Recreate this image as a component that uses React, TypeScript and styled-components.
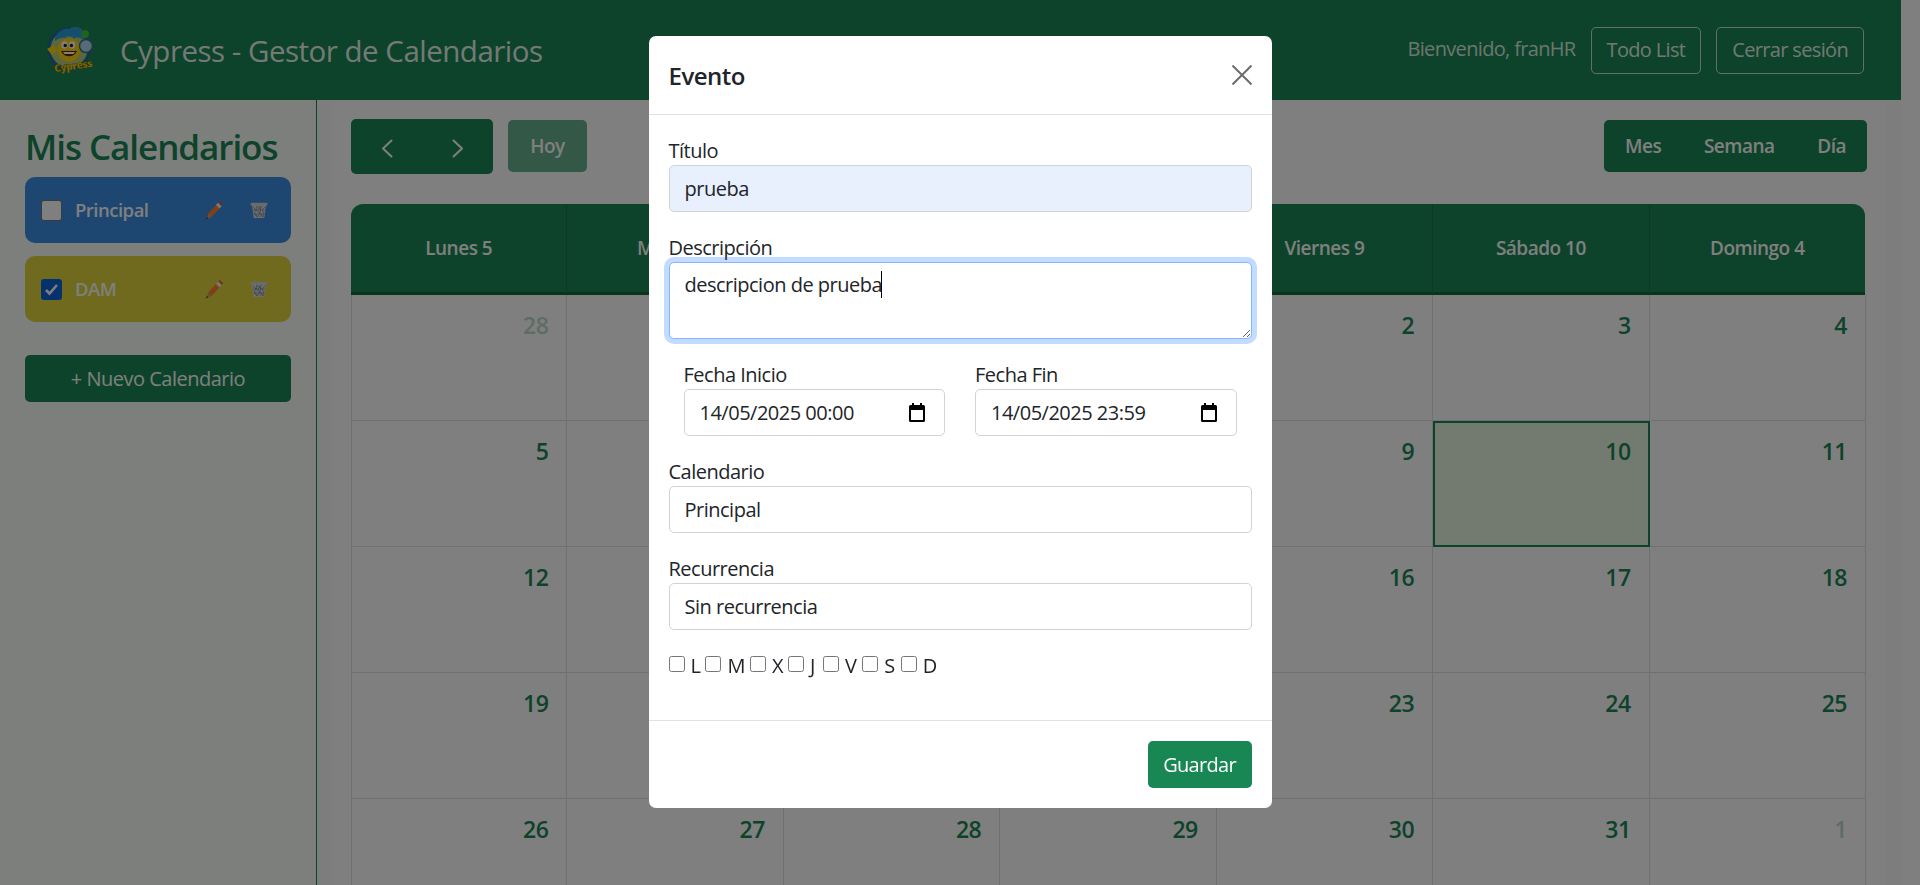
import React from 'react';
import styled, { createGlobalStyle } from 'styled-components';

const GlobalStyle = createGlobalStyle`
  html, body {
    margin: 0;
    height: 100%;
    overflow: hidden;
    background: #fff;
  }
  body {
    font-family: 'Open Sans', 'Noto Sans', sans-serif;
    font-size: 20px;
    letter-spacing: -0.025em;
    line-height: 30px;
    color: #212529;
  }
  * { box-sizing: border-box; }
`;

const Page = styled.div`
  width: 1901px;
`;

const Navbar = styled.nav`
  height: 100px;
  background: #198754;
  display: flex;
  align-items: center;
  justify-content: space-between;
  padding: 0 37px 0 46px;
`;

const Brand = styled.div`
  display: flex;
  align-items: center;
  gap: 26px;
  color: rgba(255, 255, 255, 0.92);
  font-size: 29.5px;
  line-height: 38px;
`;

const BrandName = styled.span`
  padding-top: 2px;
`;

const NavRight = styled.div`
  display: flex;
  align-items: center;
  padding-top: 2px;
  color: rgba(255, 255, 255, 0.85);
  letter-spacing: -0.033em;
`;

const Welcome = styled.span`
  margin-right: 15px;
  position: relative;
  top: -2px;
`;

const NavButton = styled.button`
  height: 47px;
  padding: 0 15px;
  margin-top: -2px;
  margin-left: ${(p: { $gap?: number }) => p.$gap || 0}px;
  background: transparent;
  border: 1px solid rgba(255, 255, 255, 0.75);
  border-radius: 5px;
  color: rgba(255, 255, 255, 0.9);
  font: inherit;
  letter-spacing: inherit;
`;

const Layout = styled.div`
  display: flex;
  height: 785px;
`;

const Sidebar = styled.aside`
  width: 317px;
  flex-shrink: 0;
  background: #fbfefa;
  border-right: 1px solid #198754;
  padding: 20px 25px 0;
`;

const SidebarTitle = styled.h2`
  margin: 0 0 1px;
  height: 56px;
  font-size: 35px;
  line-height: 54px;
  font-weight: 600;
  letter-spacing: -0.03em;
  color: #198754;
  white-space: nowrap;
`;

const CalendarCard = styled.div<{ $color: string }>`
  height: 66px;
  margin-bottom: 13px;
  padding: 0 23px 0 16px;
  display: flex;
  align-items: center;
  border-radius: 10px;
  background: ${(p) => p.$color};
  color: #fff;
  font-size: 18.5px;
  font-weight: 600;
`;

const CardCheck = styled.span<{ $checked?: boolean }>`
  width: 21px;
  height: 21px;
  margin-right: 13px;
  border-radius: 3px;
  border: ${(p) => (p.$checked ? 'none' : '1.5px solid #767676')};
  background: ${(p) => (p.$checked ? '#0b63d8' : '#fff')};
  display: flex;
  align-items: center;
  justify-content: center;
`;

const CardName = styled.span`
  flex: 1;
`;

const CardIcons = styled.span`
  display: flex;
  align-items: center;
  gap: 27px;
`;

const NewCalendar = styled.button`
  width: 266px;
  height: 47px;
  margin-top: 20px;
  background: #198754;
  border: none;
  border-radius: 5px;
  color: #fff;
  font: inherit;
  letter-spacing: inherit;
`;

const Main = styled.main`
  flex: 1;
  background: #fafafa;
  padding: 0 15px;
  min-width: 0;
`;

const MainCard = styled.section`
  background: #fff;
  height: 100%;
  padding: 19px 19px 0;
  border-radius: 10px 10px 0 0;
  overflow: hidden;
`;

const Toolbar = styled.div`
  height: 55px;
  margin-bottom: 30px;
  display: flex;
  align-items: center;
  justify-content: space-between;
  font-size: 19px;
`;

const ToolbarSide = styled.div`
  display: flex;
  align-items: center;
  gap: 15px;
`;

const ArrowGroup = styled.div`
  width: 142px;
  height: 55px;
  background: #198754;
  border-radius: 5px;
  display: flex;
`;

const ArrowButton = styled.button`
  flex: 1;
  background: none;
  border: none;
  padding: 4px 0 0;
  display: flex;
  align-items: center;
  justify-content: center;
`;

const TodayButton = styled.button`
  width: 79px;
  height: 52px;
  margin-bottom: 2px;
  background: #198754;
  opacity: 0.65;
  border: none;
  border-radius: 5px;
  color: #fff;
  font: inherit;
  font-weight: 600;
  letter-spacing: inherit;
`;

const ViewGroup = styled.div`
  height: 52px;
  width: 263px;
  margin-bottom: 2px;
  background: #198754;
  border-radius: 5px;
  display: flex;
  align-items: center;
  justify-content: space-between;
  padding: 0 21px;
  color: #fff;
  font-weight: 600;
`;

const CalendarGrid = styled.div`
  display: grid;
  grid-template-columns: repeat(7, 1fr);
  width: 1515px;
`;

const DayHeader = styled.div<{ $first?: boolean; $last?: boolean }>`
  height: 91px;
  margin-right: ${(p) => (p.$last ? '1px' : '0')};
  display: flex;
  align-items: center;
  justify-content: center;
  background: #198754;
  border-right: ${(p) => (p.$last ? 'none' : '1px solid #167549')};
  border-bottom: 3px solid #12663f;
  border-top-left-radius: ${(p) => (p.$first ? '12px' : '0')};
  border-top-right-radius: ${(p) => (p.$last ? '12px' : '0')};
  color: #fff;
  font-size: 19px;
  font-weight: 600;
`;

const DayCell = styled.div<{ $selected?: boolean; $first?: boolean }>`
  height: 126px;
  padding: 15px 18px 0 0;
  text-align: right;
  font-size: 23px;
  font-weight: 600;
  color: #198754;
  border-right: 1px solid #dfe1e1;
  border-bottom: 1px solid #dfe1e1;
  border-left: ${(p) => (p.$first ? '1px solid #dfe1e1' : 'none')};
  ${(p) =>
    p.$selected &&
    `
    background: #e6f4e1;
    outline: 2px solid #198754;
    outline-offset: -2px;
  `}
`;

const DayNumber = styled.span<{ $muted?: boolean }>`
  opacity: ${(p) => (p.$muted ? 0.3 : 1)};
`;

const Backdrop = styled.div`
  position: fixed;
  inset: 0;
  background: rgba(0, 0, 0, 0.5);
  display: flex;
  justify-content: center;
  align-items: flex-start;
  padding-top: 36px;
`;

const Modal = styled.div`
  width: 623px;
  height: 772px;
  background: #fff;
  border-radius: 7px;
  display: flex;
  flex-direction: column;
`;

const ModalHeader = styled.header`
  height: 79px;
  flex-shrink: 0;
  padding: 0 20px;
  display: flex;
  align-items: center;
  justify-content: space-between;
  border-bottom: 1px solid #dee2e6;
`;

const ModalTitle = styled.h5`
  margin: 2px 0 0;
  font-size: 24px;
  font-weight: 600;
`;

const CloseButton = styled.button`
  width: 20px;
  height: 20px;
  padding: 0;
  background: none;
  border: none;
  display: flex;
`;

const ModalBody = styled.div`
  flex: 1;
  padding: 20px;
`;

const FormGroup = styled.div`
  margin-bottom: 20px;
`;

const Label = styled.label`
  display: block;
  height: 30px;
  line-height: 32px;
  color: #212529;
`;

const Control = styled.input<{ $autofill?: boolean }>`
  display: block;
  width: 100%;
  height: 47px;
  padding: 0 15px;
  background: ${(p) => (p.$autofill ? '#e8f0fe' : '#fff')};
  border: 1.25px solid #ced4da;
  border-radius: 5px;
  color: #212529;
  font: inherit;
  letter-spacing: inherit;
  outline: none;
`;

const SelectControl = styled.select`
  display: block;
  width: 100%;
  height: 47px;
  padding: 0 15px;
  background: #fff;
  border: 1.25px solid #ced4da;
  border-radius: 5px;
  color: #212529;
  font: inherit;
  letter-spacing: inherit;
  appearance: none;
  outline: none;
`;

const TextareaWrap = styled.div`
  position: relative;
`;

const TextArea = styled.textarea`
  display: block;
  width: 100%;
  height: 77px;
  padding: 7px 15px;
  background: #fff;
  border: 1.25px solid #86b7fe;
  border-radius: 5px;
  box-shadow: 0 0 0 5px rgba(13, 110, 253, 0.25);
  color: #212529;
  caret-color: transparent;
  font: inherit;
  letter-spacing: inherit;
  outline: none;
`;

const Caret = styled.span`
  position: absolute;
  top: 9px;
  left: 212px;
  width: 1px;
  height: 27px;
  background: #000;
`;

const DateRow = styled.div`
  display: grid;
  grid-template-columns: 1fr 1fr;
  gap: 30px;
  padding: 0 15px;
  margin-bottom: 20px;
`;

const DateField = styled.div`
  position: relative;
`;

const CalendarIcon = styled.svg`
  position: absolute;
  top: 14px;
  right: 20px;
`;

const DaysRow = styled.div`
  display: flex;
  align-items: center;
  height: 30px;
  margin-top: 21px;
`;

const DayLabel = styled.label`
  display: flex;
  align-items: center;
  margin-right: ${(p: { $gap: number }) => p.$gap}px;
`;

const DayBox = styled.input`
  width: 16px;
  height: 16px;
  margin: -4px 6px 0 0;
`;

const ModalFooter = styled.footer`
  height: 88px;
  flex-shrink: 0;
  padding: 20px;
  display: flex;
  justify-content: flex-end;
  border-top: 1px solid #dee2e6;
`;

const SaveButton = styled.button`
  width: 104px;
  height: 47px;
  background: #198754;
  border: none;
  border-radius: 5px;
  color: #fff;
  font: inherit;
  letter-spacing: -0.035em;
`;

const Chevron = ({ left }: { left?: boolean }) => (
  <svg width="12" height="19" viewBox="0 0 12 19" fill="none">
    <path
      d={left ? 'M10.500 1.500L2 9.500l8.500 8' : 'M1.500 1.500L10 9.500l-8.500 8'}
      stroke="#fff"
      strokeWidth="2"
      strokeLinecap="round"
      strokeLinejoin="round"
    />
  </svg>
);

const PencilIcon = () => (
  <svg width="18" height="19" viewBox="0 0 18 19">
    <path d="M4 11.500L12 3l3.500 3.500-8 8.500-4.500 1z" fill="#ff8030" />
    <path d="M11 4l2-2.200 3.500 3.500-2 2.200z" fill="#f4f0ee" />
    <path d="M13.500 1.300L14.700 0 18 3.300 16.800 4.800z" fill="#ee4f45" />
    <path d="M3.500 12l3.500 3.500-5.500 3z" fill="#e09560" />
    <path d="M2.200 16L3.200 17l-2.600 1.800z" fill="#333" />
  </svg>
);

const TrashIcon = () => (
  <svg width="18" height="17" viewBox="0 0 18 17" fill="none">
    <path d="M2 3l1.700 13h10.600L16 3z" fill="#d6dae0" />
    <path
      d="M3 5l3 3-2 3 3 4M7 4l-1 4 4 3-3 4M11 4l-1 7 3 4M15 5l-3 3 2 3-1 4M3 8h12M4 12h10M7 4l4 4M11 4L8 8M5 12l3 3M12 12l-2 3"
      stroke="#7f858f"
      strokeWidth="0.7"
    />
    <rect x="0.500" y="0.800" width="17" height="2.600" rx="1" fill="#d2d5da" />
  </svg>
);

const CheckMark = () => (
  <svg width="15" height="15" viewBox="0 0 15 15" fill="none">
    <path d="M2 8l3.500 3.500L13 3" stroke="#fff" strokeWidth="2.600" />
  </svg>
);

const Logo = () => (
  <svg width="48" height="50" viewBox="0 0 48 50">
    <circle cx="23" cy="24" r="22" fill="#1c6f96" />
    <circle cx="23" cy="24" r="18.500" fill="#b7cd7d" />
    <path d="M9 16c-1-7 8-14 15-12 2-3 10-3 12 1 4 2 3 7 1 10-3-3-7-3-9-1-2-3-6-3-9-1-3-1-6 0-10 3z" fill="#2d9fd8" />
    <circle cx="39" cy="9" r="4" fill="#45c23c" />
    <circle cx="23" cy="25" r="11.500" fill="#ffd60a" />
    <ellipse cx="18.500" cy="20" rx="3.200" ry="3.800" fill="#fff" />
    <ellipse cx="26" cy="20" rx="3.200" ry="3.800" fill="#fff" />
    <circle cx="19.200" cy="20.500" r="1.700" fill="#222" />
    <circle cx="25.400" cy="20.500" r="1.700" fill="#222" />
    <path d="M15 26c3 7 13 7 16 0z" fill="#5b2410" />
    <path d="M17 27h12l-1.500 2h-9z" fill="#fff" />
    <circle cx="40" cy="21" r="6.500" fill="#a9d8ee" stroke="#39708c" strokeWidth="1.500" />
    <path d="M1 24l7-4 3 6-5 4z" fill="#ffd60a" />
    <text x="8" y="45" fontFamily="Open Sans" fontSize="10.500" fontWeight="800" fill="#ffd60a" stroke="#4d3b00" strokeWidth="0.300" letterSpacing="-0.600" transform="rotate(-8 24 41)">
      Cypress
    </text>
  </svg>
);

const headers = ['Lunes 5', 'Martes 6', 'Miércoles 7', 'Jueves 8', 'Viernes 9', 'Sábado 10', 'Domingo 4'];

const weeks: number[][] = [
  [28, 29, 30, 1, 2, 3, 4],
  [5, 6, 7, 8, 9, 10, 11],
  [12, 13, 14, 15, 16, 17, 18],
  [19, 20, 21, 22, 23, 24, 25],
  [26, 27, 28, 29, 30, 31, 1],
];

const repeatDays = [
  { name: 'L', gap: 5 },
  { name: 'M', gap: 5 },
  { name: 'X', gap: 5 },
  { name: 'J', gap: 8 },
  { name: 'V', gap: 6 },
  { name: 'S', gap: 6 },
  { name: 'D', gap: 0 },
];

const isMuted = (week: number, day: number) => (week === 0 && day < 3) || (week === 4 && day === 6);

const DateInput = ({ label, value }: { label: string; value: string }) => (
  <div>
    <Label>{label}</Label>
    <DateField>
      <Control type="text" readOnly value={value} />
      <CalendarIcon width="16" height="19" viewBox="0 0 16 19">
        <path d="M3 0h2v2h6V0h2v2h1.500A1.500 1.500 0 0 1 16 3.500v14a1.500 1.500 0 0 1-1.500 1.500h-13A1.500 1.500 0 0 1 0 17.500v-14A1.500 1.500 0 0 1 1.500 2H3zM2 7v10h12V7z" fill="#000" />
      </CalendarIcon>
    </DateField>
  </div>
);

const App = () => (
  <>
    <GlobalStyle />
    <Page>
      <Navbar>
        <Brand>
          <Logo />
          <BrandName>Cypress - Gestor de Calendarios</BrandName>
        </Brand>
        <NavRight>
          <Welcome>Bienvenido, franHR</Welcome>
          <NavButton>Todo List</NavButton>
          <NavButton $gap={15}>Cerrar sesión</NavButton>
        </NavRight>
      </Navbar>
      <Layout>
        <Sidebar>
          <SidebarTitle>Mis Calendarios</SidebarTitle>
          <CalendarCard $color="#3a8ce0">
            <CardCheck />
            <CardName>Principal</CardName>
            <CardIcons>
              <PencilIcon />
              <TrashIcon />
            </CardIcons>
          </CalendarCard>
          <CalendarCard $color="#ded43a">
            <CardCheck $checked>
              <CheckMark />
            </CardCheck>
            <CardName>DAM</CardName>
            <CardIcons>
              <PencilIcon />
              <TrashIcon />
            </CardIcons>
          </CalendarCard>
          <NewCalendar>+ Nuevo Calendario</NewCalendar>
        </Sidebar>
        <Main>
          <MainCard>
            <Toolbar>
              <ToolbarSide>
                <ArrowGroup>
                  <ArrowButton>
                    <Chevron left />
                  </ArrowButton>
                  <ArrowButton>
                    <Chevron />
                  </ArrowButton>
                </ArrowGroup>
                <TodayButton>Hoy</TodayButton>
              </ToolbarSide>
              <ViewGroup>
                <span>Mes</span>
                <span>Semana</span>
                <span>Día</span>
              </ViewGroup>
            </Toolbar>
            <CalendarGrid>
              {headers.map((h, i) => (
                <DayHeader key={h} $first={i === 0} $last={i === 6}>
                  {h}
                </DayHeader>
              ))}
              {weeks.map((week, w) =>
                week.map((d, i) => (
                  <DayCell key={`${w}-${i}`} $first={i === 0} $selected={w === 1 && i === 5}>
                    <DayNumber $muted={isMuted(w, i)}>{d}</DayNumber>
                  </DayCell>
                ))
              )}
            </CalendarGrid>
          </MainCard>
        </Main>
      </Layout>
    </Page>
    <Backdrop>
      <Modal>
        <ModalHeader>
          <ModalTitle>Evento</ModalTitle>
          <CloseButton aria-label="Cerrar">
            <svg width="20" height="20" viewBox="0 0 20 20">
              <path d="M0.500 0.500l19 19M19.500 0.500l-19 19" stroke="#6c6c6c" strokeWidth="2" />
            </svg>
          </CloseButton>
        </ModalHeader>
        <ModalBody>
          <FormGroup>
            <Label>Título</Label>
            <Control $autofill type="text" readOnly value="prueba" />
          </FormGroup>
          <FormGroup>
            <Label>Descripción</Label>
            <TextareaWrap>
              <TextArea readOnly value="descripcion de prueba" />
              <Caret />
            </TextareaWrap>
          </FormGroup>
          <DateRow>
            <DateInput label="Fecha Inicio" value="14/05/2025 00:00" />
            <DateInput label="Fecha Fin" value="14/05/2025 23:59" />
          </DateRow>
          <FormGroup>
            <Label>Calendario</Label>
            <SelectControl defaultValue="Principal">
              <option>Principal</option>
              <option>DAM</option>
            </SelectControl>
          </FormGroup>
          <FormGroup>
            <Label>Recurrencia</Label>
            <SelectControl defaultValue="Sin recurrencia">
              <option>Sin recurrencia</option>
            </SelectControl>
          </FormGroup>
          <DaysRow>
            {repeatDays.map((d) => (
              <DayLabel key={d.name} $gap={d.gap}>
                <DayBox type="checkbox" />
                {d.name}
              </DayLabel>
            ))}
          </DaysRow>
        </ModalBody>
        <ModalFooter>
          <SaveButton>Guardar</SaveButton>
        </ModalFooter>
      </Modal>
    </Backdrop>
  </>
);

export default App;
